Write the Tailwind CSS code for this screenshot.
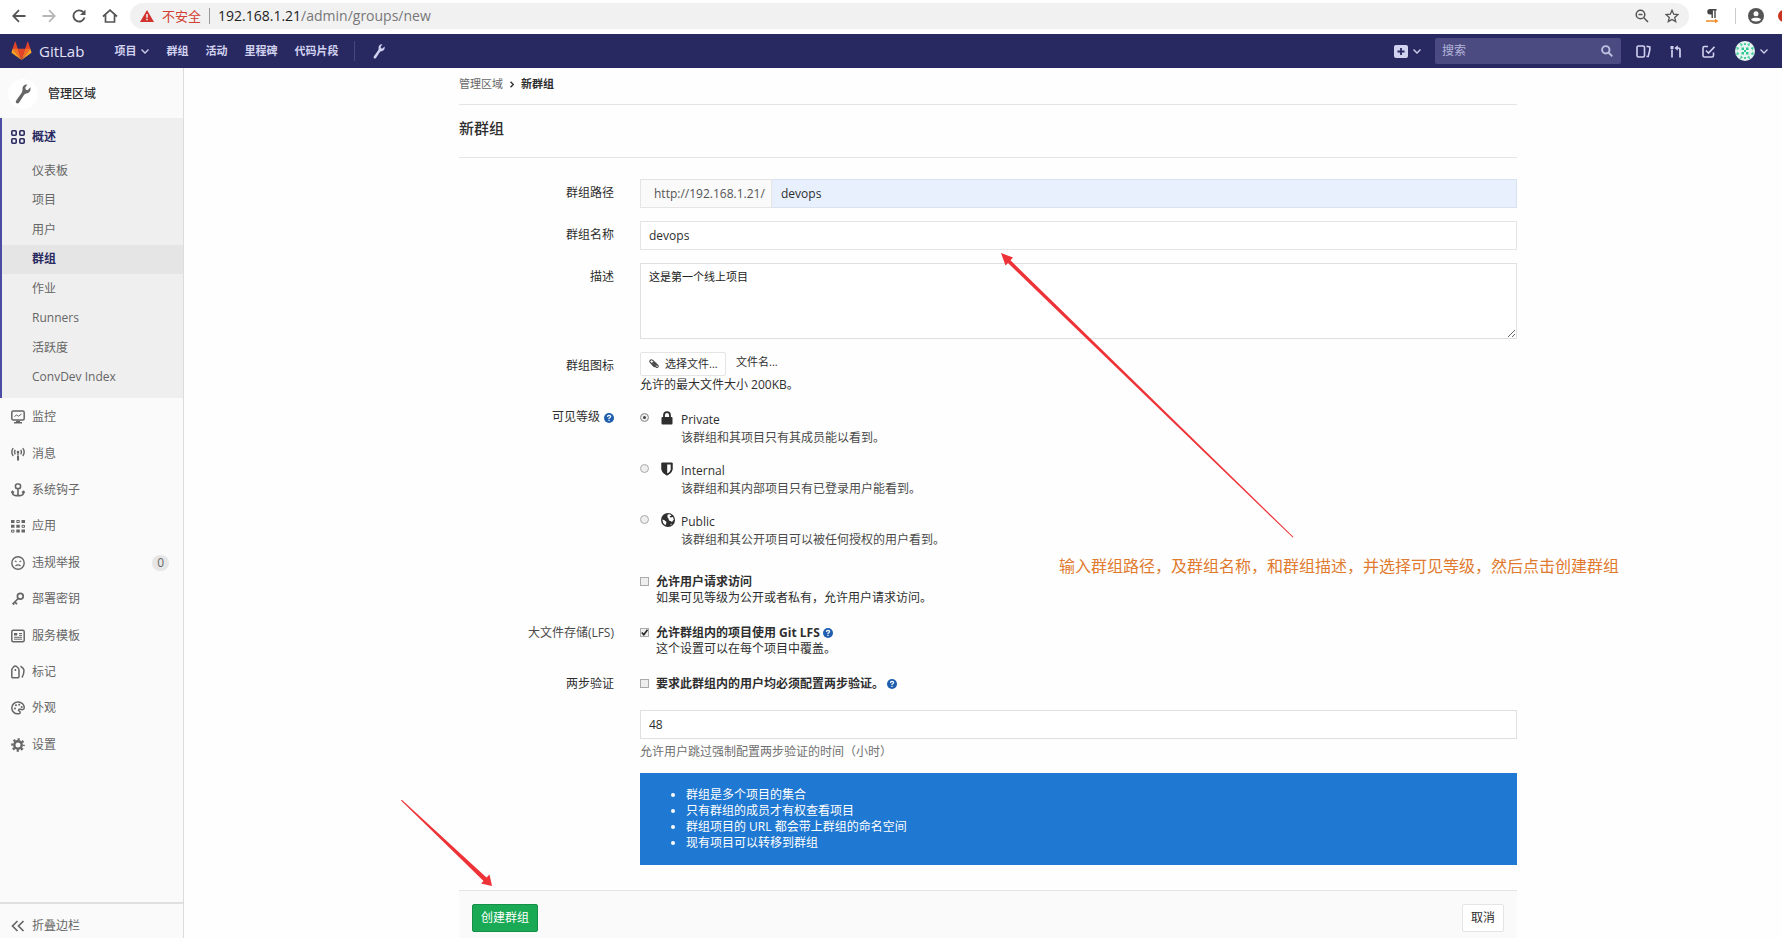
<!DOCTYPE html>
<html lang="zh-CN">
<head>
<meta charset="utf-8">
<title>新群组 · GitLab</title>
<script src="https://cdn.jsdelivr.net/npm/@tailwindcss/browser@4"></script>
</head>
<body class="relative flex min-h-screen flex-col overflow-x-hidden bg-[#fefefe] font-['Open_Sans','Noto_Sans_CJK_SC',sans-serif] text-xs text-[#2e2e2e]">

<!-- Browser toolbar -->
<div class="flex h-[34px] shrink-0 items-center overflow-hidden bg-white pb-1 pt-0.5 pl-3">
  <div class="flex items-center gap-4 text-[#555]">
    <button type="button" aria-label="后退"><svg class="size-3.5" viewBox="0 0 14 14" fill="none" stroke="currentColor" stroke-width="1.8"><path d="M13.500 7H1.500M7 1.200L1.200 7L7 12.800"/></svg></button>
    <button type="button" aria-label="前进" class="text-[#b8b8b8]"><svg class="size-3.5" viewBox="0 0 14 14" fill="none" stroke="currentColor" stroke-width="1.800"><path d="M.5 7H12.500M7 1.200L12.800 7L7 12.800"/></svg></button>
    <button type="button" aria-label="刷新"><svg class="size-3.5" viewBox="0 0 14 14" fill="none" stroke="currentColor" stroke-width="1.900"><path d="M11.300 3.200A5.600 5.600 0 1 0 12.500 8.500"/><path d="M13.500 .5V6H8Z" fill="currentColor" stroke="none"/></svg></button>
    <button type="button" aria-label="主页"><svg class="h-3.5 w-4" viewBox="0 0 16 14" fill="none" stroke="currentColor" stroke-width="1.700"><path d="M1 7.500L8 1.200L15 7.500M3.500 6V13H12.500V6"/></svg></button>
  </div>
  <div class="ml-3 flex h-[26px] flex-1 items-center rounded-full bg-[#f1f1f2] pl-2.5 pr-2.5">
    <svg class="h-3 w-3.5" viewBox="0 0 14 12"><path d="M7 0L14 12H0Z" fill="#d1332e"/><path d="M6.300 4H7.700V7.800H6.300ZM6.300 8.800H7.700V10.200H6.300Z" fill="#fff"/></svg>
    <span class="ml-2 text-[13px] leading-4 text-[#d23f31]">不安全</span>
    <span class="mx-2 h-4 w-px bg-[#999]"></span>
    <span class="text-sm leading-5 text-[#777]"><span class="text-[#222]">192.168.1.21</span>/admin/groups/new</span>
    <button type="button" aria-label="缩放" class="ml-auto text-[#555]"><svg class="size-3.5" viewBox="0 0 14 14" fill="none" stroke="currentColor" stroke-width="1.500"><circle cx="5.500" cy="5.500" r="4.300"/><path d="M8.800 8.800L13 13M3.500 5.500H7.500"/></svg></button>
    <button type="button" aria-label="收藏" class="ml-4 text-[#555]"><svg class="size-3.5" viewBox="0 0 14 14" fill="none" stroke="currentColor" stroke-width="1.300"><path d="M7 1.300L8.700 5.200L13 5.600L9.700 8.400L10.700 12.600L7 10.400L3.300 12.600L4.300 8.400L1 5.600L5.300 5.200Z"/></svg></button>
  </div>
  <button type="button" aria-label="扩展" class="ml-4"><svg class="h-4 w-3.5" viewBox="0 0 14 16"><path d="M5 1H11.500V2.400H10.700V10H9.300V2.400H7.900V10H6.500V6.500H5A2.750 2.750 0 0 1 5 1Z" fill="#444"/><path d="M1 12.200H10V10.800L13.500 13L10 15.200V13.800H1Z" fill="#ee8a28"/></svg></button>
  <span class="ml-4 h-4 w-px bg-[#ccc]"></span>
  <button type="button" aria-label="用户" class="ml-3"><svg class="size-4" viewBox="0 0 16 16"><circle cx="8" cy="8" r="8" fill="#555"/><circle cx="8" cy="5.800" r="2.500" fill="#fff"/><path d="M3 11.500C4 9.200 12 9.200 13 11.500C11.500 14 4.500 14 3 11.500Z" fill="#fff"/></svg></button>
  <span class="ml-3.5 -mr-2 size-3 shrink-0 rounded-full bg-[#c8321f]"></span>
</div>

<!-- Navigation bar -->
<header class="flex h-[34px] shrink-0 items-center bg-[#292961] pl-[11px] pr-3.5 text-[#d1d1f0]">
  <a href="#" class="flex items-center gap-[7px] text-[15px] leading-5 text-[#e3e3f7]">
    <svg class="h-5 w-[21px]" viewBox="0 0 36 36"><path fill="#e24329" d="M2 14l9.380 9v-9l-4-12.280c-.205-.632-1.176-.632-1.380 0z"/><path fill="#e24329" d="M34 14l-9.380 9v-9l4-12.280c.205-.632 1.176-.632 1.380 0z"/><path fill="#e24329" d="M18 34.380L11.380 14h13.240z"/><path fill="#fc6d26" d="M18 34.380L11.380 14H2l6 7.500zM18 34.380L24.620 14H34l-6 7.500z"/><path fill="#fca326" d="M2 14L.1 20.160c-.180.565 0 1.200.5 1.560l17.420 12.660zM34 14l1.900 6.160c.180.565 0 1.200-.5 1.560L18 34.380z"/></svg>
    GitLab</a>
  <nav class="ml-[30px] flex items-center gap-[17px] text-[11px] font-bold leading-4">
    <button type="button" class="flex items-center gap-[5px]">项目<svg class="h-[5px] w-2" viewBox="0 0 8 5" fill="none" stroke="currentColor" stroke-width="1.300"><path d="M.5 .5L4 4L7.500 .5"/></svg></button>
    <a href="#">群组</a><a href="#">活动</a><a href="#">里程碑</a><a href="#">代码片段</a>
  </nav>
  <span class="ml-4 h-5 w-px bg-[#48487c]"></span>
  <a href="#" aria-label="管理区域" class="ml-[18px]"><svg class="h-[15px] w-3" viewBox="0 0 12 15"><path fill="currentColor" d="M11.500 2.500L9.500 4.600L8 4.200L7.700 2.700L9.300 .4C7 .1 5.300 1.700 5.600 4.200C5.700 5 5.400 5.800 5 6.500L.8 12.600C-.1 14.100 2 15.400 3 14L6.700 8.300C7.200 7.600 7.800 7.400 8.500 7.200C11 6.600 12.200 4.800 11.500 2.500Z"/></svg></a>

  <div class="ml-auto flex items-center">
    <button type="button" aria-label="新建" class="flex items-center gap-[5px]"><svg class="h-[13px] w-3.5" viewBox="0 0 14 13"><rect width="14" height="13" rx="2" fill="currentColor"/><path d="M7 3V10M3.500 6.500H10.500" stroke="#292961" stroke-width="1.800"/></svg><svg class="h-[5px] w-2" viewBox="0 0 8 5" fill="none" stroke="currentColor" stroke-width="1.300"><path d="M.5 .5L4 4L7.500 .5"/></svg></button>
    <label class="ml-3.5 flex h-[26px] w-[186px] items-center rounded-xs bg-[#4b4b81] pl-[7px] pr-2">
      <input type="search" aria-label="搜索" placeholder="搜索" class="min-w-0 flex-1 bg-transparent text-xs leading-4 outline-none placeholder:text-[#b5b5dc]">
      <svg class="size-3 text-[#c0c0e2]" viewBox="0 0 12 12" fill="none" stroke="currentColor" stroke-width="1.900"><circle cx="4.800" cy="4.800" r="3.700"/><path d="M7.500 7.500L11.300 11.300"/></svg>
    </label>
    <a href="#" aria-label="议题" class="ml-[15px]"><svg class="h-[13px] w-[15px]" viewBox="0 0 15 13" fill="none" stroke="currentColor" stroke-width="1.600"><rect x="1" y="1" width="7.500" height="11" rx="1.500"/><path d="M10.500 1.300L13.800 2V5L12.200 11.500H10.500"/></svg></a>
    <a href="#" aria-label="合并请求" class="ml-[19px]"><svg class="h-[13px] w-3" viewBox="0 0 12 13" fill="none" stroke="currentColor" stroke-width="1.700"><path d="M2 4.500V12.500M5.500 3H8Q10 3 10 5V12.500"/><path d="M.5 1H3.500V4H.5ZM7.800 .2V5.800L4.500 3Z" fill="currentColor" stroke="none"/></svg></a>
    <a href="#" aria-label="待办" class="ml-5"><svg class="size-[13px]" viewBox="0 0 13 13" fill="none" stroke="currentColor" stroke-width="1.600"><path d="M6 1.500H2.500Q1 1.500 1 3V10.500Q1 12 2.500 12H10Q11.500 12 11.500 10.500V7.500M4 5.500L6.500 8L12.500 1.800"/></svg></a>
    <button type="button" aria-label="账户" class="ml-5 flex items-center gap-[5px]"><svg class="size-5" viewBox="0 0 20 20"><circle cx="10" cy="10" r="10" fill="#e6f5f0"/><g fill="#2cc793"><path d="M6.500 6.500H9V9H6.500ZM11 6.500H13.500V9H11ZM6.500 11H9V13.500H6.500ZM11 11H13.500V13.500H11ZM9 9H11V11H9Z"/><path opacity=".8" d="M4.500 1.500L8 3.500L6 5.500ZM15.500 1.500L12 3.500L14 5.500ZM4.500 18.500L8 16.500L6 14.500ZM15.500 18.500L12 16.500L14 14.500ZM1 5.500L4.500 7L2 9.500ZM19 5.500L15.500 7L18 9.500ZM1 14.500L4.500 13L2 10.500ZM19 14.500L15.500 13L18 10.500ZM9 2H11V4H9ZM9 16H11V18H9Z"/></g></svg><svg class="h-[5px] w-2" viewBox="0 0 8 5" fill="none" stroke="currentColor" stroke-width="1.300"><path d="M.5 .5L4 4L7.500 .5"/></svg></button>
  </div>
</header>

<div class="flex flex-1">
  <!-- Sidebar -->
  <aside class="flex w-[184px] shrink-0 flex-col border-r border-[#dcdcdc] bg-[#fafafa] text-[#666]">
    <a href="#" class="flex h-[50px] items-center gap-2.5 pl-2 pt-0.5 font-medium text-[#2e2e2e]">
      <span class="grid size-[30px] place-items-center rounded-full bg-white text-[#666]"><svg class="h-5 w-4" viewBox="0 0 12 15"><path fill="currentColor" d="M11.500 2.500L9.500 4.600L8 4.200L7.700 2.700L9.300 .4C7 .1 5.300 1.700 5.600 4.200C5.700 5 5.400 5.800 5 6.500L.8 12.600C-.1 14.100 2 15.400 3 14L6.700 8.300C7.200 7.600 7.800 7.400 8.500 7.200C11 6.600 12.200 4.800 11.500 2.500Z"/></svg></span>
      管理区域</a>
    <div class="border-l-2 border-[#4b4ba3] bg-[#efefef] pb-1.5">
      <a href="#" class="flex h-[38px] items-center gap-[7px] pl-[9px] font-bold text-[#292961]"><svg class="size-3.5" viewBox="0 0 14 14" fill="none" stroke="currentColor" stroke-width="1.600"><rect x=".8" y=".8" width="4.400" height="4.400" rx="1"/><rect x="8.800" y=".8" width="4.400" height="4.400" rx="1"/><rect x=".8" y="8.800" width="4.400" height="4.400" rx="1"/><rect x="8.800" y="8.800" width="4.400" height="4.400" rx="1"/></svg>概述</a>
      <ul class="grid h-[236px] auto-rows-fr">
        <li class="flex items-center pl-[30px]"><a href="#">仪表板</a></li>
        <li class="flex items-center pl-[30px]"><a href="#">项目</a></li>
        <li class="flex items-center pl-[30px]"><a href="#">用户</a></li>
        <li class="flex items-center bg-[#e5e5e5] pl-[30px] font-bold text-[#292961]"><a href="#">群组</a></li>
        <li class="flex items-center pl-[30px]"><a href="#">作业</a></li>
        <li class="flex items-center pl-[30px]"><a href="#">Runners</a></li>
        <li class="flex items-center pl-[30px]"><a href="#">活跃度</a></li>
        <li class="flex items-center pl-[30px]"><a href="#">ConvDev Index</a></li>
      </ul>
    </div>
    <ul class="mt-px grid h-[364px] auto-rows-fr pl-[11px] pr-3.5">
      <li class="flex items-center"><a href="#" class="flex items-center gap-[7px]"><svg class="size-3.5" viewBox="0 0 14 14" fill="none" stroke="currentColor" stroke-width="1.500"><rect x=".8" y="1" width="12.400" height="9" rx="1.500"/><path d="M3 12.800H11M5 11.500H9"/><path d="M3.500 6.500L5.500 5L7.500 6.200L10.500 4" stroke-width="1"/></svg>监控</a></li>
      <li class="flex items-center"><a href="#" class="flex items-center gap-[7px]"><svg class="size-3.5" viewBox="0 0 14 14" fill="none" stroke="currentColor" stroke-width="1.400"><path d="M2.200 1.200Q-.6 5 2.200 9M11.800 1.200Q14.600 5 11.800 9M4.300 2.800Q2.800 5 4.300 7.400M9.700 2.800Q11.200 5 9.700 7.400M7 5V8"/><circle cx="7" cy="5" r="1.300" fill="currentColor" stroke="none"/><path d="M7 8.500V13.500" stroke-width="2"/></svg>消息</a></li>
      <li class="flex items-center"><a href="#" class="flex items-center gap-[7px]"><svg class="size-3.5" viewBox="0 0 14 14" fill="none" stroke="currentColor" stroke-width="1.600"><rect x="4.500" y="1" width="5" height="4.500" rx="1.800"/><path d="M7 5.500V12.500M1.300 8.500Q1.500 12.600 5 12.600H9Q12.500 12.600 12.700 8.500M.3 10L1.400 8.400L3 9.600M11 9.600L12.600 8.400L13.700 10"/></svg>系统钩子</a></li>
      <li class="flex items-center"><a href="#" class="flex items-center gap-[7px]"><svg class="size-3.5" viewBox="0 0 14 14"><path fill="currentColor" d="M0 1H3.500V4H0ZM10.500 1H14V4H10.500ZM0 5.800H3.500V8.800H0ZM5.300 5.800H8.800V8.800H5.300ZM5.300 10.600H8.800V13.600H5.300ZM10.500 10.600H14V13.600H10.500Z"/><path fill="none" stroke="currentColor" d="M5.800 1.500H8.300V3.500H5.800ZM11 6.300H13.500V8.300H11ZM.5 11.100H3V13.100H.5Z"/></svg>应用</a></li>
      <li class="flex items-center justify-between"><a href="#" class="flex items-center gap-[7px]"><svg class="size-3.5" viewBox="0 0 14 14" fill="none" stroke="currentColor" stroke-width="1.400"><circle cx="7" cy="7" r="6.200"/><path d="M4.500 10Q7 7.800 9.500 10M3.800 5L5.600 5.800M10.200 5L8.400 5.800" stroke-width="1.200"/></svg>违规举报</a><span class="rounded-full bg-[#e6e6e6] px-[5px] text-xs leading-4">0</span></li>
      <li class="flex items-center"><a href="#" class="flex items-center gap-[7px]"><svg class="size-3.5" viewBox="0 0 14 14" fill="none" stroke="currentColor" stroke-width="1.700"><circle cx="9.300" cy="4.300" r="2.900"/><path d="M7.200 6.500L1.800 12M3.300 9.500L6 12.200M1.500 11L3.200 12.700"/></svg>部署密钥</a></li>
      <li class="flex items-center"><a href="#" class="flex items-center gap-[7px]"><svg class="size-3.5" viewBox="0 0 14 14" fill="none" stroke="currentColor" stroke-width="1.500"><rect x=".8" y="1.300" width="12.400" height="11.400" rx="1.500"/><path d="M3 5H6.500M8 4.500H11M8 6.300H11M3 8.300H11M3 10.200H11" stroke-width="1"/><path d="M3 4H6V6.500H3Z" fill="currentColor" stroke="none"/></svg>服务模板</a></li>
      <li class="flex items-center"><a href="#" class="flex items-center gap-[7px]"><svg class="size-3.5" viewBox="0 0 14 14" fill="none" stroke="currentColor" stroke-width="1.500"><path d="M.8 4.500Q1 3.500 3 1.500Q4.300 .7 5.600 1.500Q8 3.500 8 4.500V11.500Q8 12.700 7 12.700H1.800Q.8 12.700 .8 11.500ZM4.400 4V6M9.500 1.200Q12.800 3.500 13 5Q13 9.500 11 12.500"/></svg>标记</a></li>
      <li class="flex items-center"><a href="#" class="flex items-center gap-[7px]"><svg class="size-3.5" viewBox="0 0 14 14" fill="none" stroke="currentColor" stroke-width="1.500"><path d="M8.500 12.500C4 13.800 .8 10.700 .8 7C.8 3.300 3.800 1 7 1C10.700 1 13.500 3.600 13.200 7C13 9 11 8.800 9.500 8.300C7.500 7.800 7 9.500 8.300 10.200C9.300 10.800 9.500 12 8.500 12.500Z"/><g fill="currentColor" stroke="none"><circle cx="4" cy="7.500" r="1"/><circle cx="5" cy="4.300" r="1"/><circle cx="8.200" cy="3.700" r="1"/><circle cx="10.700" cy="6" r="1"/></g></svg>外观</a></li>
      <li class="flex items-center"><a href="#" class="flex items-center gap-[7px]"><svg class="size-3.5" viewBox="0 0 14 14" fill="none" stroke="currentColor"><circle cx="7" cy="7" r="3.700" stroke-width="2.400"/><circle cx="7" cy="7" r="5.700" stroke-width="2.200" stroke-dasharray="2.240 2.240" stroke-dashoffset="1.120"/></svg>设置</a></li>
    </ul>
    <button type="button" class="mt-auto flex h-9 items-center gap-[7px] border-t-2 border-[#e0e0e0] pl-[11px] pt-2.5"><svg class="h-3 w-3.5" viewBox="0 0 14 12" fill="none" stroke="currentColor" stroke-width="1.700"><path d="M6.500 1L1.500 6L6.500 11M12.500 1L7.500 6L12.500 11"/></svg>折叠边栏</button>
  </aside>

  <!-- Page content -->
  <main class="min-w-0 flex-1 pl-2.5">
    <div class="mx-auto flex h-full max-w-[1058px] flex-col">
      <nav class="flex h-[37px] items-center gap-[7px] border-b border-[#e5e5e5] pb-1 text-[11px]">
        <a href="#" class="text-[#666]">管理区域</a>
        <svg class="h-[7px] w-1" viewBox="0 0 4 7" fill="none" stroke="#333" stroke-width="1.500"><path d="M.5 .7L3.300 3.500L.5 6.300"/></svg>
        <span class="font-bold">新群组</span>
      </nav>
      <h1 class="flex h-[53px] items-center border-b border-[#e5e5e5] pb-1.5 text-[15px] font-medium">新群组</h1>

      <form class="mt-[21px] flex flex-1 flex-col" onsubmit="return false">
        <div class="grid grid-cols-[155px_1fr] gap-x-[26px] gap-y-[13px] leading-4">
          <label for="path" class="pt-1.5 text-right">群组路径</label>
          <div class="flex h-[29px]">
            <span class="flex w-[132px] items-center border border-[#e5e5e5] bg-[#fafafa] pl-[13px] text-[#555]">http://192.168.1.21/</span>
            <input id="path" value="devops" class="min-w-0 flex-1 border border-l-0 border-[#d9e2f0] bg-[#e8f0fe] px-[9px] outline-none">
          </div>

          <label for="name" class="pt-1.5 text-right">群组名称</label>
          <input id="name" value="devops" class="h-[29px] border border-[#e5e5e5] bg-white px-2 outline-none">

          <label for="desc" class="pt-1.5 text-right">描述</label>
          <textarea id="desc" class="h-[76px] resize-y border border-[#e0e0e0] bg-white px-2 py-[5px] text-[11px] leading-4 text-[#222] outline-none">这是第一个线上项目</textarea>

          <span class="pt-1.5 text-right">群组图标</span>
          <div>
            <div class="flex items-start gap-2.5">
              <button type="button" class="flex h-6 w-[86px] items-center gap-1.5 rounded-xs border border-[#e5e5e5] bg-white pl-2 text-[11px]"><svg class="size-2.5" viewBox="0 0 10 10" fill="none" stroke="#444" stroke-width="1.100"><path d="M3 3.500L7 8Q8.300 9 9 8Q9.600 7 8.500 6L3.500 1.200Q2 .3 1.200 1.300Q.4 2.300 1.300 3.500L5.500 8M4 3L7.500 6.800"/></svg>选择文件...</button>
              <span class="text-[11px] leading-5">文件名...</span>
            </div>
            <p class="leading-[18px]">允许的最大文件大小 200KB。</p>
          </div>

          <span class="flex justify-end gap-1 pt-0.5">可见等级<svg class="mt-1 size-2.5" viewBox="0 0 10 10"><circle cx="5" cy="5" r="5" fill="#1f5fae"/><path d="M3.400 3.900Q3.500 2.300 5 2.300Q6.700 2.400 6.600 3.800Q6.500 4.600 5 5.200V6" fill="none" stroke="#fff" stroke-width="1.200"/><path d="M4.400 6.800H5.600V8H4.400Z" fill="#fff"/></svg></span>
          <div class="flex flex-col gap-[11px]">
            <label class="grid grid-cols-[21px_20px_1fr] pt-1 leading-[18px]">
              <input type="radio" name="visibility" checked class="mt-0.5 size-[9px] appearance-none rounded-full border border-[#aaa] bg-[#eee] checked:bg-[#444] checked:shadow-[inset_0_0_0_2px_#eee]">
              <svg class="h-3.5 w-3" viewBox="0 0 12 14"><path d="M3 7V4.200Q3 1.200 6 1.200Q9 1.200 9 4.200V7" fill="none" stroke="#2e2e2e" stroke-width="1.800"/><rect x=".5" y="6" width="11" height="7.500" rx="1" fill="#2e2e2e"/></svg>
              <span>Private<span class="block text-[#4a4a4a]">该群组和其项目只有其成员能以看到。</span></span>
            </label>
            <label class="grid grid-cols-[21px_20px_1fr] pt-1 leading-[18px]">
              <input type="radio" name="visibility" class="mt-0.5 size-[9px] appearance-none rounded-full border border-[#aaa] bg-[#eee] checked:bg-[#444] checked:shadow-[inset_0_0_0_2px_#eee]">
              <svg class="h-3.5 w-3" viewBox="0 0 12 14"><path d="M.8 1H11.200V7.500Q10.800 11 6 13.200Q1.200 11 .8 7.500Z" fill="#2e2e2e" stroke="#2e2e2e"/><path d="M6.200 2.500H9.700V7.500Q9.500 9.700 6.200 11.400Z" fill="#fff"/></svg>
              <span>Internal<span class="block text-[#4a4a4a]">该群组和其内部项目只有已登录用户能看到。</span></span>
            </label>
            <label class="grid grid-cols-[21px_20px_1fr] pt-1 leading-[18px]">
              <input type="radio" name="visibility" class="mt-0.5 size-[9px] appearance-none rounded-full border border-[#aaa] bg-[#eee] checked:bg-[#444] checked:shadow-[inset_0_0_0_2px_#eee]">
              <svg class="size-3.5" viewBox="0 0 14 14"><circle cx="7" cy="7" r="7" fill="#2e2e2e"/><path d="M6.500 1.500L9 1.200L10.500 2.500L8.500 3.500L9.500 4.500L12 4L12.800 6.500L11 9L9.500 8L8 7.500L7.500 5.500L6.500 4.500ZM1.300 6.500L3.500 7.200L5.500 9L5 11L4.300 12.300Q1.500 10.500 1.300 6.500ZM9.300 11.500L11 10.500L10 12.200Z" fill="#fff"/></svg>
              <span>Public<span class="block text-[#4a4a4a]">该群组和其公开项目可以被任何授权的用户看到。</span></span>
            </label>
          </div>

          <span></span>
          <div class="mt-1.5 flex gap-[7px] pt-1.5">
            <input id="access" type="checkbox" class="mt-[3px] size-[9px] appearance-none border border-[#aaa] bg-[#eee]">
            <div><label for="access" class="block font-bold">允许用户请求访问</label><p>如果可见等级为公开或者私有，允许用户请求访问。</p></div>
          </div>

          <span class="pt-1.5 text-right text-[#4a4a4a]">大文件存储(LFS)</span>
          <div class="flex gap-[7px] pt-1.5">
            <span class="mt-[3px] grid size-[9px]">
              <input id="lfs" type="checkbox" checked class="peer col-start-1 row-start-1 size-[9px] appearance-none border border-[#aaa] bg-[#eee]">
              <svg class="pointer-events-none invisible col-start-1 row-start-1 size-[9px] peer-checked:visible" viewBox="0 0 9 9" fill="none" stroke="#222" stroke-width="1.600"><path d="M1.800 4.500L3.800 6.700L7.500 1.800"/></svg>
            </span>
            <div><label for="lfs" class="flex items-center gap-[3px] font-bold">允许群组内的项目使用 Git LFS<svg class="size-2.5" viewBox="0 0 10 10"><circle cx="5" cy="5" r="5" fill="#1f5fae"/><path d="M3.400 3.900Q3.500 2.300 5 2.300Q6.700 2.400 6.600 3.800Q6.500 4.600 5 5.200V6" fill="none" stroke="#fff" stroke-width="1.200"/><path d="M4.400 6.800H5.600V8H4.400Z" fill="#fff"/></svg></label><p>这个设置可以在每个项目中覆盖。</p></div>
          </div>

          <span class="pt-1.5 text-right">两步验证</span>
          <div class="flex flex-col pt-1.5">
            <div class="flex gap-[7px]">
              <input id="tfa" type="checkbox" class="mt-[3px] size-[9px] appearance-none border border-[#aaa] bg-[#eee]">
              <label for="tfa" class="flex items-center gap-[3px] font-bold">要求此群组内的用户均必须配置两步验证。<svg class="size-2.5" viewBox="0 0 10 10"><circle cx="5" cy="5" r="5" fill="#1f5fae"/><path d="M3.400 3.900Q3.500 2.300 5 2.300Q6.700 2.400 6.600 3.800Q6.500 4.600 5 5.200V6" fill="none" stroke="#fff" stroke-width="1.200"/><path d="M4.400 6.800H5.600V8H4.400Z" fill="#fff"/></svg></label>
            </div>
            <input aria-label="宽限时间" value="48" class="mt-[18px] h-[29px] border border-[#e0e0e0] bg-white px-2 outline-none">
            <p class="mt-[5px] text-[#707070]">允许用户跳过强制配置两步验证的时间（小时）</p>
          </div>

          <ul class="col-start-2 list-disc bg-[#1f78d1] py-3.5 pl-[46px] text-white">
            <li>群组是多个项目的集合</li>
            <li>只有群组的成员才有权查看项目</li>
            <li>群组项目的 URL 都会带上群组的命名空间</li>
            <li>现有项目可以转移到群组</li>
          </ul>
        </div>

        <div class="mt-auto flex items-center justify-between border-t border-[#e5e5e5] bg-[#fafafa] px-[13px] pb-1.5 pt-[13px]">
          <button type="submit" class="h-7 rounded-xs border border-[#168f48] bg-[#1aaa55] px-2 text-white">创建群组</button>
          <button type="button" class="h-7 rounded-xs border border-[#e5e5e5] bg-white px-2">取消</button>
        </div>
      </form>
    </div>
  </main>
</div>

<!-- Tutorial annotations floating over the page -->
<svg class="pointer-events-none absolute left-[1000px] top-[252px] h-[286px] w-[294px]" viewBox="0 0 294 286"><path fill="#ee3338" d="M1 1L13 5.500L10.500 8.300L293.500 285L292.700 285.600L8 11L5.500 13.500Z"/></svg>
<svg class="pointer-events-none absolute left-[400px] top-[799px] h-[88px] w-[94px]" viewBox="0 0 94 88"><path fill="#ee3338" d="M92 87L81 84.500L83.500 82L1 1.500L1.800 .8L86.500 78.500L89.500 75.500Z"/></svg>
<p class="pointer-events-none absolute left-[1059px] top-[554px] whitespace-nowrap text-base leading-6 text-[#e07a2e]">输入群组路径，及群组名称，和群组描述，并选择可见等级，然后点击创建群组</p>
</body>
</html>
